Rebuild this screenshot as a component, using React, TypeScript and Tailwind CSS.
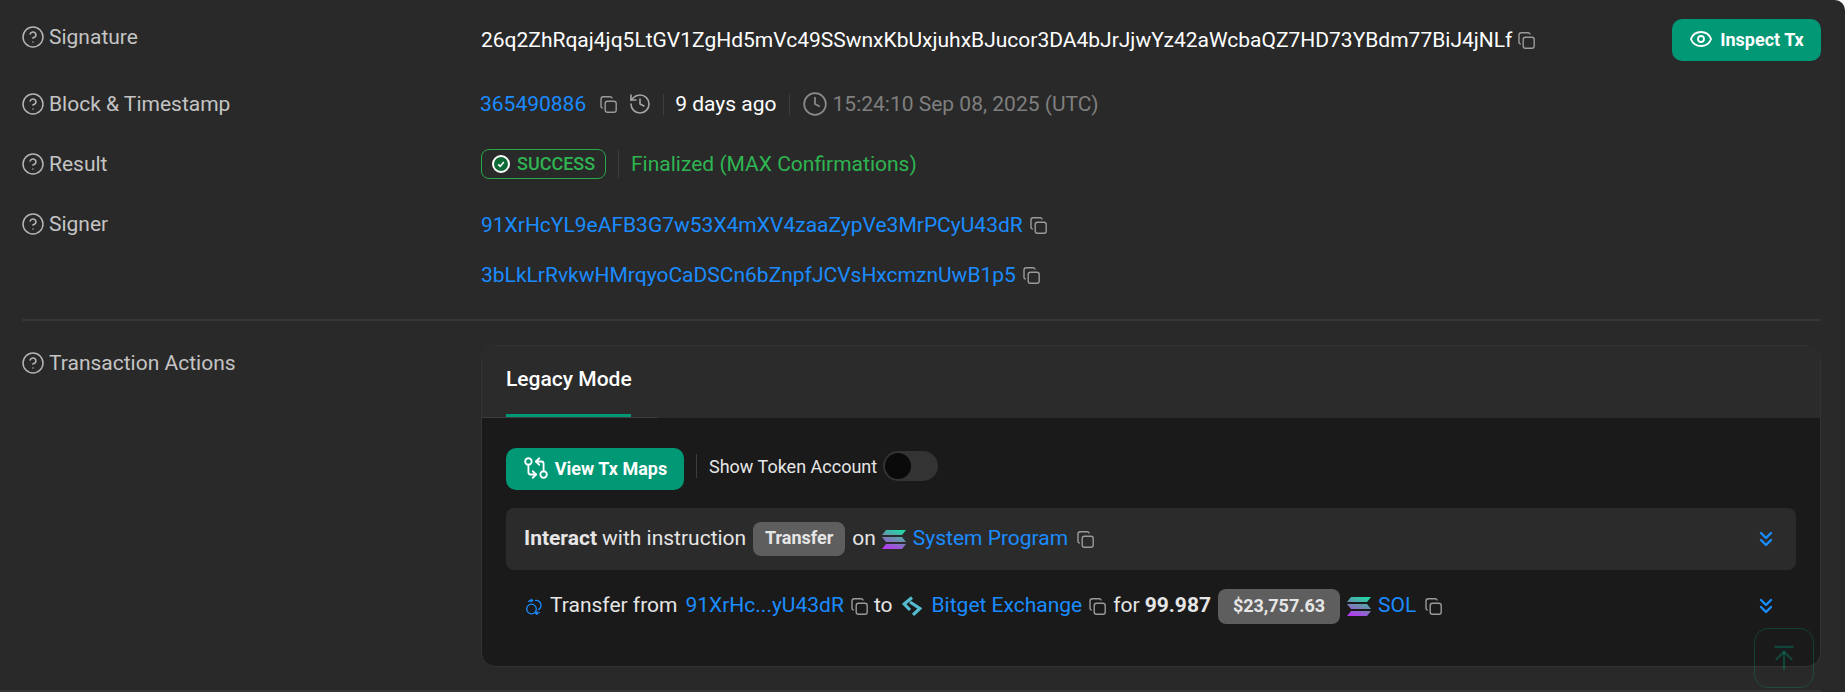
import React from 'react';
import { Eye, GitCompareArrows, Clock, History, ArrowUpToLine, ChevronsDown, CircleHelp } from 'lucide-react';

const BLUE = 'text-[#1a8cff]';

const CopyIcon = () => (
  <svg className="h-[17px] w-[17px] shrink-0" viewBox="0 0 17 17" fill="none" stroke="#9a9a9a" strokeWidth="1.4">
    <rect x="5.2" y="5.2" width="11" height="11" rx="2.2" />
    <path d="M2.8 12 A1.8 1.8 0 0 1 1 10.2 V3 A2.2 2.2 0 0 1 3.2 0.8 H10.2 A1.8 1.8 0 0 1 12 2.6" />
  </svg>
);

const SolanaLogo = () => (
  <svg className="h-[19px] w-[24px] shrink-0" viewBox="0 0 24 19">
    <defs>
      <linearGradient id="sol" x1="0.7" y1="0" x2="0.3" y2="1">
        <stop offset="0" stopColor="#22d6a5" />
        <stop offset="0.5" stopColor="#7288b0" />
        <stop offset="1" stopColor="#b53af2" />
      </linearGradient>
    </defs>
    <path d="M4 0H24L20 5H0Z M0 7H20L24 12H4Z M4 14H24L20 19H0Z" fill="url(#sol)" />
  </svg>
);

const Label = ({ children }: { children: React.ReactNode }) => (
  <div className="-ml-[1px] flex w-[460px] shrink-0 items-center gap-[4px] text-[21px] leading-[28px] text-[#c4c4c4]">
    <CircleHelp className="h-[24px] w-[24px] text-[#b5b5b5]" strokeWidth={1.5} />
    {children}
  </div>
);

export default function App() {
  return (
    <div className="h-[692px] w-[1845px] overflow-hidden rounded-tr-[10px] bg-[#292929] font-['Roboto',sans-serif]">
      <div className="h-[690px] pl-[22px] pr-[24px]">
        {/* Signature */}
        <div className="flex h-[74px] items-start pt-[23px]">
          <Label>Signature</Label>
          <div className="flex flex-1 items-center gap-[6px] pt-[3px] text-[21px] leading-[28px] text-white">
            26q2ZhRqaj4jq5LtGV1ZgHd5mVc49SSwnxKbUxjuhxBJucor3DA4bJrJjwYz42aWcbaQZ7HD73YBdm77BiJ4jNLf
            <CopyIcon />
          </div>
          <button className="-mt-[4px] ml-auto flex h-[42px] w-[149px] shrink-0 items-center justify-center gap-[7px] rounded-[10px] bg-[#019875] pb-[2px] text-[18px] font-bold text-white">
            <Eye className="h-[24px] w-[24px]" strokeWidth={1.8} />
            Inspect Tx
          </button>
        </div>

        {/* Block */}
        <div className="flex h-[60px] items-center">
          <Label>Block &amp; Timestamp</Label>
          <div className="-ml-[1px] flex items-center text-[21px] leading-[28px]">
            <span className={BLUE}>365490886</span>
            <span className="ml-[14px]"><CopyIcon /></span>
            <History className="ml-[11px] h-[24px] w-[24px] text-[#a5a5a5]" strokeWidth={1.6} />
            <div className="ml-[11px] h-[21px] w-px bg-[#3d3d3d]" />
            <span className="ml-[11px] text-white">9 days ago</span>
            <div className="ml-[12px] h-[21px] w-px bg-[#3d3d3d]" />
            <Clock className="ml-[12px] h-[26px] w-[26px] text-[#8a8a8a]" strokeWidth={1.6} />
            <span className="ml-[5px] text-[#7f7f7f]">15:24:10 Sep 08, 2025 (UTC)</span>
          </div>
        </div>

        {/* Result */}
        <div className="flex h-[60px] items-center">
          <Label>Result</Label>
          <div className="flex items-center text-[21px] leading-[28px]">
            <span className="flex h-[30px] w-[125px] items-center rounded-[8px] border border-[#27a84a] pl-[10px] text-[18px] font-medium text-[#2fb551]">
              <span className="mr-[7px] flex h-[18px] w-[18px] items-center justify-center rounded-full border-2 border-white bg-[#0f6b36]">
                <svg className="h-[8px] w-[8px]" viewBox="0 0 10 10" fill="none" stroke="white" strokeWidth="2"><path d="M1.5 5.5L4 8L8.5 2.5" /></svg>
              </span>
              SUCCESS
            </span>
            <div className="ml-[12px] h-[28px] w-px bg-[#3d3d3d]" />
            <span className="ml-[12px] text-[#2fb551]">Finalized (MAX Confirmations)</span>
          </div>
        </div>

        {/* Signer */}
        <div className="flex items-start pt-[16px]">
          <Label>Signer</Label>
          <div className="flex flex-col gap-[22px] pt-[1px] text-[21px] leading-[28px]">
            <div className="flex items-center gap-[7px]">
              <span className={BLUE}>91XrHcYL9eAFB3G7w53X4mXV4zaaZypVe3MrPCyU43dR</span>
              <CopyIcon />
            </div>
            <div className="flex items-center gap-[7px]">
              <span className={BLUE}>3bLkLrRvkwHMrqyoCaDSCn6bZnpfJCVsHxcmznUwB1p5</span>
              <CopyIcon />
            </div>
          </div>
        </div>

        <div className="mt-[30px] h-[2px] bg-[#363636]" />

        {/* Transaction Actions */}
        <div className="flex items-start pt-[24px]">
          <div className="pt-[4px]">
            <Label>Transaction Actions</Label>
          </div>
          <div className="h-[322px] w-[1340px] overflow-hidden rounded-[14px] border border-[#333333] bg-[#1a1a1a]">
            <div className="h-[72px] bg-[#2b2b2b]">
              <div className="h-full w-[175px] border-b border-[#3d3d3d] pl-[24px]">
                <div className="flex h-full w-[125px] items-center whitespace-nowrap border-b-[3px] border-[#019875] text-[21px] font-medium text-white">
                  Legacy Mode
                </div>
              </div>
            </div>

            <div className="px-[24px] pt-[30px]">
              <div className="flex items-center">
                <button className="flex h-[42px] w-[178px] items-center justify-center gap-[6px] rounded-[10px] bg-[#019875] pb-[2px] text-[18px] font-bold text-white">
                  <GitCompareArrows className="h-[26px] w-[26px]" strokeWidth={1.7} />
                  View Tx Maps
                </button>
                <div className="mb-[6px] flex items-center">
                  <div className="ml-[12px] h-[24px] w-px bg-[#3d3d3d]" />
                  <span className="ml-[12px] text-[18px] text-[#e6e6e6]">Show Token Account</span>
                  <div className="ml-[6px] flex h-[30px] w-[55px] items-center rounded-full bg-[#333333] pl-[2px]">
                    <div className="h-[26px] w-[26px] rounded-full bg-[#0a0a0a]" />
                  </div>
                </div>
              </div>

              <div className="mt-[18px] flex h-[62px] items-center rounded-[8px] bg-[#2b2b2b] pl-[18px] pr-[18px] text-[21px] text-[#e6e6e6]">
                <span className="font-bold">Interact</span>
                <span className="ml-[5px]">with instruction</span>
                <span className="ml-[7px] flex h-[34px] w-[92px] items-center justify-center rounded-[8px] bg-[#5e5e5e] pb-[3px] text-[18px] font-bold">Transfer</span>
                <span className="ml-[7px]">on</span>
                <span className="ml-[6px]"><SolanaLogo /></span>
                <span className={`ml-[7px] ${BLUE}`}>System Program</span>
                <span className="ml-[9px]"><CopyIcon /></span>
                <ChevronsDown className={`ml-auto h-[24px] w-[24px] ${BLUE}`} strokeWidth={2.4} />
              </div>

              <div className="flex h-[72px] items-center pl-[20px] pr-[18px] text-[21px] text-[#e6e6e6]">
                <svg className="mr-[8px] h-[17px] w-[16px] shrink-0" viewBox="0 0 16 17" fill="none" stroke="#1a8cff" strokeWidth="1.3">
                  <circle cx="5.5" cy="11" r="4.8" />
                  <path d="M9 2.6 A4.8 4.8 0 0 1 15 7 A4.8 4.8 0 0 1 12 11.7" />
                  <path d="M2.4 4 A3.2 3.2 0 0 1 6.4 2.6 M5 0.8 L6.6 2.7 L4.5 4" />
                  <path d="M13.6 14 A3.2 3.2 0 0 1 9.8 15.2 M11.2 16.8 L9.6 15 L11.7 13.5" />
                </svg>
                <span>Transfer from</span>
                <span className={`ml-[8px] ${BLUE}`}>91XrHc...yU43dR</span>
                <span className="ml-[7px]"><CopyIcon /></span>
                <span className="ml-[6px]">to</span>
                <svg className="ml-[9px] h-[20px] w-[20px] shrink-0" viewBox="0 0 20 20" fill="none" stroke="#55bcd0" strokeWidth="3.2">
                  <path d="M10 1.5L2.2 8L8 14" />
                  <path d="M8 6L17.8 12.5L11 18.8" />
                </svg>
                <span className={`ml-[10px] ${BLUE}`}>Bitget Exchange</span>
                <span className="ml-[7px]"><CopyIcon /></span>
                <span className="ml-[7px]">for</span>
                <span className="ml-[5px] font-bold">99.987</span>
                <span className="ml-[7px] flex h-[35px] w-[122px] items-center justify-center rounded-[8px] bg-[#5e5e5e] pb-[2px] text-[18px] font-bold">$23,757.63</span>
                <span className="ml-[7px]"><SolanaLogo /></span>
                <span className={`ml-[7px] ${BLUE}`}>SOL</span>
                <span className="ml-[9px]"><CopyIcon /></span>
                <ChevronsDown className={`ml-auto h-[24px] w-[24px] ${BLUE}`} strokeWidth={2.4} />
              </div>
            </div>
          </div>
        </div>
      </div>
      <div className="h-[2px] w-[1821px] bg-[#353535]" />

      {/* Back to top */}
      <button className="fixed left-[1754px] top-[628px] flex h-[60px] w-[60px] items-center justify-center rounded-[14px] border border-[#019875]/30">
        <ArrowUpToLine className="h-[30px] w-[30px] text-[#019875]/35" strokeWidth={1.8} />
      </button>
    </div>
  );
}
